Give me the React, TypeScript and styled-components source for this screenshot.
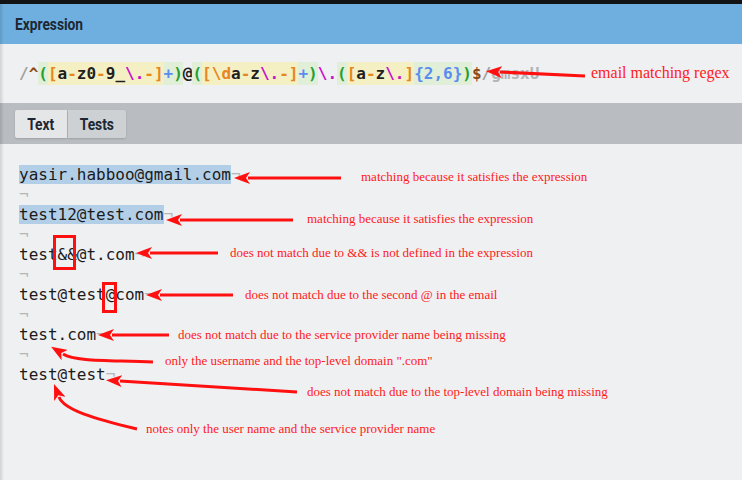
import React from "react";
import styled, { createGlobalStyle } from "styled-components";

const GlobalStyle = createGlobalStyle`
  html, body { margin: 0; padding: 0; background: #eff0f2; }
  body { width: 742px; height: 480px; overflow: hidden; }
`;

const MONO = `"DejaVu Sans Mono", "Liberation Mono", monospace`;
const COND = `"Roboto", "Liberation Sans", sans-serif`;

const Root = styled.div`
  position: relative;
  width: 742px;
  height: 480px;
  overflow: hidden;
  background: #eff0f2;
  display: flex;
  flex-direction: column;
  &::before {
    content: "";
    position: absolute;
    left: 0;
    top: 4px;
    bottom: 0;
    width: 4px;
    background: linear-gradient(to right, rgba(0, 0, 0, 0.13), rgba(0, 0, 0, 0));
    z-index: 1;
  }
`;

const TopStrip = styled.div`
  height: 4px;
  background: #121314;
`;

const Header = styled.div`
  height: 40px;
  background: #6eafe0;
  display: flex;
  align-items: center;
  padding-left: 15px;
`;

const Condensed = styled.span`
  display: inline-block;
  font-family: ${COND};
  font-weight: 700;
  font-size: 16px;
  color: #1d2733;
  transform: scaleX(0.86);
  transform-origin: center;
`;

const Title = styled(Condensed)`
  transform-origin: left center;
`;

const RegexBar = styled.div`
  height: 59px;
  display: flex;
  align-items: center;
  padding: 0 19px;
  font-family: ${MONO};
  font-weight: 700;
  font-size: 16px;
  white-space: pre;
`;

const Tok = styled.span<{ $c: string }>`
  color: ${(p) => p.$c};
`;

const Group = styled.span`
  background: #e1efd9;
  padding: 2px 0;
`;

const Cls = styled.span`
  background: #f4f0c4;
  padding: 2px 0;
`;

const TabBar = styled.div`
  height: 41px;
  box-sizing: border-box;
  background: #b9bdc1;
  display: flex;
  align-items: flex-start;
  padding: 7px 15px 0;
  gap: 1px;
`;

const Tab = styled.div<{ $active?: boolean; $w: number }>`
  width: ${(p) => p.$w}px;
  height: 28px;
  display: flex;
  align-items: center;
  justify-content: center;
  background: ${(p) => (p.$active ? "#e4e6e8" : "#cdd1d4")};
  border-radius: ${(p) => (p.$active ? "2px 0 0 2px" : "0 2px 2px 0")};
  box-shadow: 0 1px 2px rgba(0, 0, 0, 0.15);
`;

const Editor = styled.div`
  flex: 1;
  padding: 21px 19px 0;
  font-family: ${MONO};
  font-size: 16px;
  line-height: 20px;
  color: #1b1b1b;
  white-space: pre;
`;

const Line = styled.div`
  height: 20px;
`;

const Match = styled.span`
  background: #b3cfe8;
`;

const Ws = styled.span`
  color: #b4b6b8;
`;

const Overlay = styled.svg`
  position: absolute;
  left: 0;
  top: 0;
  width: 742px;
  height: 480px;
  pointer-events: none;
  z-index: 2;
`;

const Note = styled.span<{ $x: number; $y: number; $big?: boolean }>`
  position: absolute;
  left: ${(p) => p.$x}px;
  top: ${(p) => p.$y - (p.$big ? 10 : 8)}px;
  font-family: "Liberation Serif", "Times New Roman", serif;
  font-size: ${(p) => (p.$big ? 16 : 13)}px;
  line-height: ${(p) => (p.$big ? 20 : 16)}px;
  color: #ff1a1a;
  white-space: nowrap;
  z-index: 3;
`;

const Mark = styled.div<{ $x: number; $y: number; $w: number; $h: number }>`
  position: absolute;
  left: ${(p) => p.$x}px;
  top: ${(p) => p.$y}px;
  width: ${(p) => p.$w}px;
  height: ${(p) => p.$h}px;
  box-sizing: border-box;
  border: 3px solid #ff1010;
  z-index: 3;
`;

const C = {
  slash: "#a0a0a0",
  anchor: "#8a4a16",
  paren: "#27a02e",
  bracket: "#e5871c",
  lit: "#1f1f1f",
  esc: "#c811c8",
  quant: "#5b8def",
  flags: "#b3b5b8",
};

const Regex = () => (
  <>
    <Tok $c={C.slash}>/</Tok>
    <Tok $c={C.anchor}>^</Tok>
    <Group>
      <Tok $c={C.paren}>(</Tok>
      <Cls>
        <Tok $c={C.bracket}>[</Tok>
        <Tok $c={C.lit}>a</Tok>
        <Tok $c={C.bracket}>-</Tok>
        <Tok $c={C.lit}>z0</Tok>
        <Tok $c={C.bracket}>-</Tok>
        <Tok $c={C.lit}>9_</Tok>
        <Tok $c={C.esc}>\.</Tok>
        <Tok $c={C.bracket}>-]</Tok>
      </Cls>
      <Tok $c={C.quant}>+</Tok>
      <Tok $c={C.paren}>)</Tok>
    </Group>
    <Tok $c={C.lit}>@</Tok>
    <Group>
      <Tok $c={C.paren}>(</Tok>
      <Cls>
        <Tok $c={C.bracket}>[\d</Tok>
        <Tok $c={C.lit}>a</Tok>
        <Tok $c={C.bracket}>-</Tok>
        <Tok $c={C.lit}>z</Tok>
        <Tok $c={C.esc}>\.</Tok>
        <Tok $c={C.bracket}>-]</Tok>
      </Cls>
      <Tok $c={C.quant}>+</Tok>
      <Tok $c={C.paren}>)</Tok>
    </Group>
    <Tok $c={C.esc}>\.</Tok>
    <Group>
      <Tok $c={C.paren}>(</Tok>
      <Cls>
        <Tok $c={C.bracket}>[</Tok>
        <Tok $c={C.lit}>a</Tok>
        <Tok $c={C.bracket}>-</Tok>
        <Tok $c={C.lit}>z</Tok>
        <Tok $c={C.esc}>\.</Tok>
        <Tok $c={C.bracket}>]</Tok>
      </Cls>
      <Tok $c={C.quant}>{"{2,6}"}</Tok>
      <Tok $c={C.paren}>)</Tok>
    </Group>
    <Tok $c={C.anchor}>$</Tok>
    <Tok $c={C.slash}>/</Tok>
    <Tok $c={C.flags}>gmsxU</Tok>
  </>
);

const tests: { text: string; match: boolean }[] = [
  { text: "yasir.habboo@gmail.com", match: true },
  { text: "test12@test.com", match: true },
  { text: "test&&@t.com", match: false },
  { text: "test@test@com", match: false },
  { text: "test.com", match: false },
  { text: "test@test", match: false },
];

const arrows: string[] = [
  "M341,178 L248,178",
  "M293,220 L180,220",
  "M218,253 L150,253",
  "M233,295 L160,295",
  "M169,335 L112,335",
  "M153,362 C112,360 76,362 63,354",
  "M297,392 L120,381",
  "M137,429 C95,419 64,410 59,397",
  "M585,76 L500,72",
];

const notes: { x: number; y: number; t: string; big?: boolean }[] = [
  { x: 591, y: 73, t: "email matching regex", big: true },
  { x: 361, y: 177, t: "matching because it satisfies the expression" },
  { x: 307, y: 219, t: "matching because it satisfies the expression" },
  { x: 230, y: 253, t: "does not match due to && is not defined in the expression" },
  { x: 245, y: 295, t: "does not match due to the second @ in the email" },
  { x: 178, y: 335, t: "does not match due to the service provider name being missing" },
  { x: 165, y: 361, t: 'only the username and the top-level domain ".com"' },
  { x: 307, y: 392, t: "does not match due to the top-level domain being missing" },
  { x: 146, y: 429, t: "notes only the user name and the service provider name" },
];

export default function App() {
  return (
    <Root>
      <GlobalStyle />
      <TopStrip />
      <Header>
        <Title>Expression</Title>
      </Header>
      <RegexBar>
        <Regex />
      </RegexBar>
      <TabBar>
        <Tab $active $w={52}>
          <Condensed>Text</Condensed>
        </Tab>
        <Tab $w={58}>
          <Condensed>Tests</Condensed>
        </Tab>
      </TabBar>
      <Editor>
        {tests.map((l, i) => (
          <React.Fragment key={i}>
            {i > 0 && (
              <Line>
                <Ws>¬</Ws>
              </Line>
            )}
            <Line>
              {l.match ? <Match>{l.text}</Match> : l.text}
              <Ws>¬</Ws>
            </Line>
          </React.Fragment>
        ))}
      </Editor>

      <Overlay viewBox="0 0 742 480">
        <defs>
          <marker
            id="head"
            markerUnits="userSpaceOnUse"
            markerWidth="16"
            markerHeight="12"
            refX="2"
            refY="6"
            orient="auto"
          >
            <path d="M0,0 L16,6 L0,12 L4,6 Z" fill="#ff1010" />
          </marker>
        </defs>
        {arrows.map((d, i) => (
          <path key={i} d={d} stroke="#ff1010" strokeWidth="3" fill="none" markerEnd="url(#head)" />
        ))}
      </Overlay>
      {notes.map((n, i) => (
        <Note key={i} $x={n.x} $y={n.y} $big={n.big}>
          {n.t}
        </Note>
      ))}
      <Mark $x={53} $y={235} $w={23} $h={35} />
      <Mark $x={102} $y={282} $w={15} $h={31} />
    </Root>
  );
}
